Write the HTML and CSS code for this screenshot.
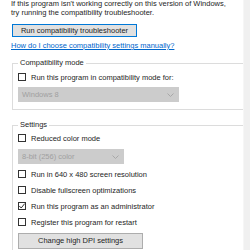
FILE: index.html
```html
<!DOCTYPE html>
<html lang="en">
<head>
    <meta charset="UTF-8">
    <title>Compatibility</title>
    <link rel="stylesheet" href="styles.css">
</head>
<body>
    <div class="window">
        <div class="content">
            <p class="intro">If this program isn't working correctly on this version of Windows,<br>try running the compatibility troubleshooter.</p>
            <button class="btn btn-focus">Run compatibility troubleshooter</button>
            <a class="help-link" href="#">How do I choose compatibility settings manually?</a>

            <fieldset class="group group-compat">
                <legend>Compatibility mode</legend>
                <label class="check"><span class="box"></span>Run this program in compatibility mode for:</label>
                <div class="select select-os">
                    <span>Windows 8</span>
                    <svg class="chevron" width="7" height="4" viewBox="0 0 7 4"><path d="M0.5 0.5 L3.5 3.5 L6.5 0.5" fill="none" stroke="#a8a8a8" stroke-width="1"/></svg>
                </div>
            </fieldset>

            <fieldset class="group group-settings">
                <legend>Settings</legend>
                <label class="check"><span class="box"></span>Reduced color mode</label>
                <div class="select select-color">
                    <span>8-bit (256) color</span>
                    <svg class="chevron" width="7" height="4" viewBox="0 0 7 4"><path d="M0.5 0.5 L3.5 3.5 L6.5 0.5" fill="none" stroke="#a8a8a8" stroke-width="1"/></svg>
                </div>
                <label class="check"><span class="box"></span>Run in 640 x 480 screen resolution</label>
                <label class="check"><span class="box"></span>Disable fullscreen optimizations</label>
                <label class="check"><span class="box">
                    <svg width="6" height="6" viewBox="0 0 6 6"><path d="M0.3 3 L2.2 5 L5.7 0.6" fill="none" stroke="#333" stroke-width="1"/></svg>
                </span>Run this program as an administrator</label>
                <label class="check"><span class="box"></span>Register this program for restart</label>
                <button class="btn btn-dpi">Change high DPI settings</button>
            </fieldset>
        </div>
        <div class="scroll"></div>
    </div>
</body>
</html>
```

FILE: styles.css
```css
body {
    margin: 0;
    background-color: #fff;
    font-family: "Liberation Sans", Arial, sans-serif;
    font-size: 7.5px;
    color: #1e1e1e;
    overflow: hidden;
}

.window {
    display: flex;
    height: 250px;
}

.content {
    width: 233px;
    padding-left: 11px;
}

.scroll {
    flex: 1;
    background-color: #f0f0f0;
    border-left: 1px solid #f6f6f6;
    margin-left: -1px;
}

.intro {
    margin: -1px 0 0 0;
    line-height: 9px;
}

.btn {
    display: block;
    font-family: inherit;
    font-size: 7.5px;
    color: #1e1e1e;
    background-color: #e1e1e1;
    border: 1px solid #adadad;
    padding: 0;
    height: 13px;
    line-height: 11px;
}

.btn-focus {
    margin: 7px 0 0 1px;
    width: 125px;
    border-color: #0078d7;
}

.help-link {
    display: block;
    margin-top: 4px;
    line-height: 10px;
    color: #0066cc;
    text-decoration: underline;
}

.group {
    margin: 7px 0 0 1px;
    padding: 0 0 0 5px;
    border: 1px solid #dcdcdc;
    min-inline-size: 0;
}

.group legend {
    padding: 0 2px;
    margin-left: 0;
    line-height: 10px;
}

.group-compat {
    padding-top: 1px;
    padding-bottom: 7px;
}

.group-settings {
    margin-top: 10px;
    height: 140px;
}

.check {
    display: flex;
    align-items: center;
    height: 16px;
}

.box {
    width: 6px;
    height: 6px;
    border: 1px solid #333;
    background-color: #fff;
    margin-right: 5px;
    display: flex;
    align-items: center;
    justify-content: center;
}

.box svg {
    display: block;
}

.select {
    display: flex;
    align-items: center;
    justify-content: space-between;
    height: 15px;
    padding: 0 5px 0 4px;
    background-color: #cccccc;
    color: #a0a0a0;
    box-sizing: border-box;
}

.select-os {
    width: 161px;
    margin-top: 2px;
}

.select-color {
    width: 106px;
    margin: 3px 0 2px 0;
}

.chevron {
    display: block;
}

.btn-dpi {
    margin-top: 3px;
    width: 125px;
    height: 16px;
    line-height: 14px;
}
```
